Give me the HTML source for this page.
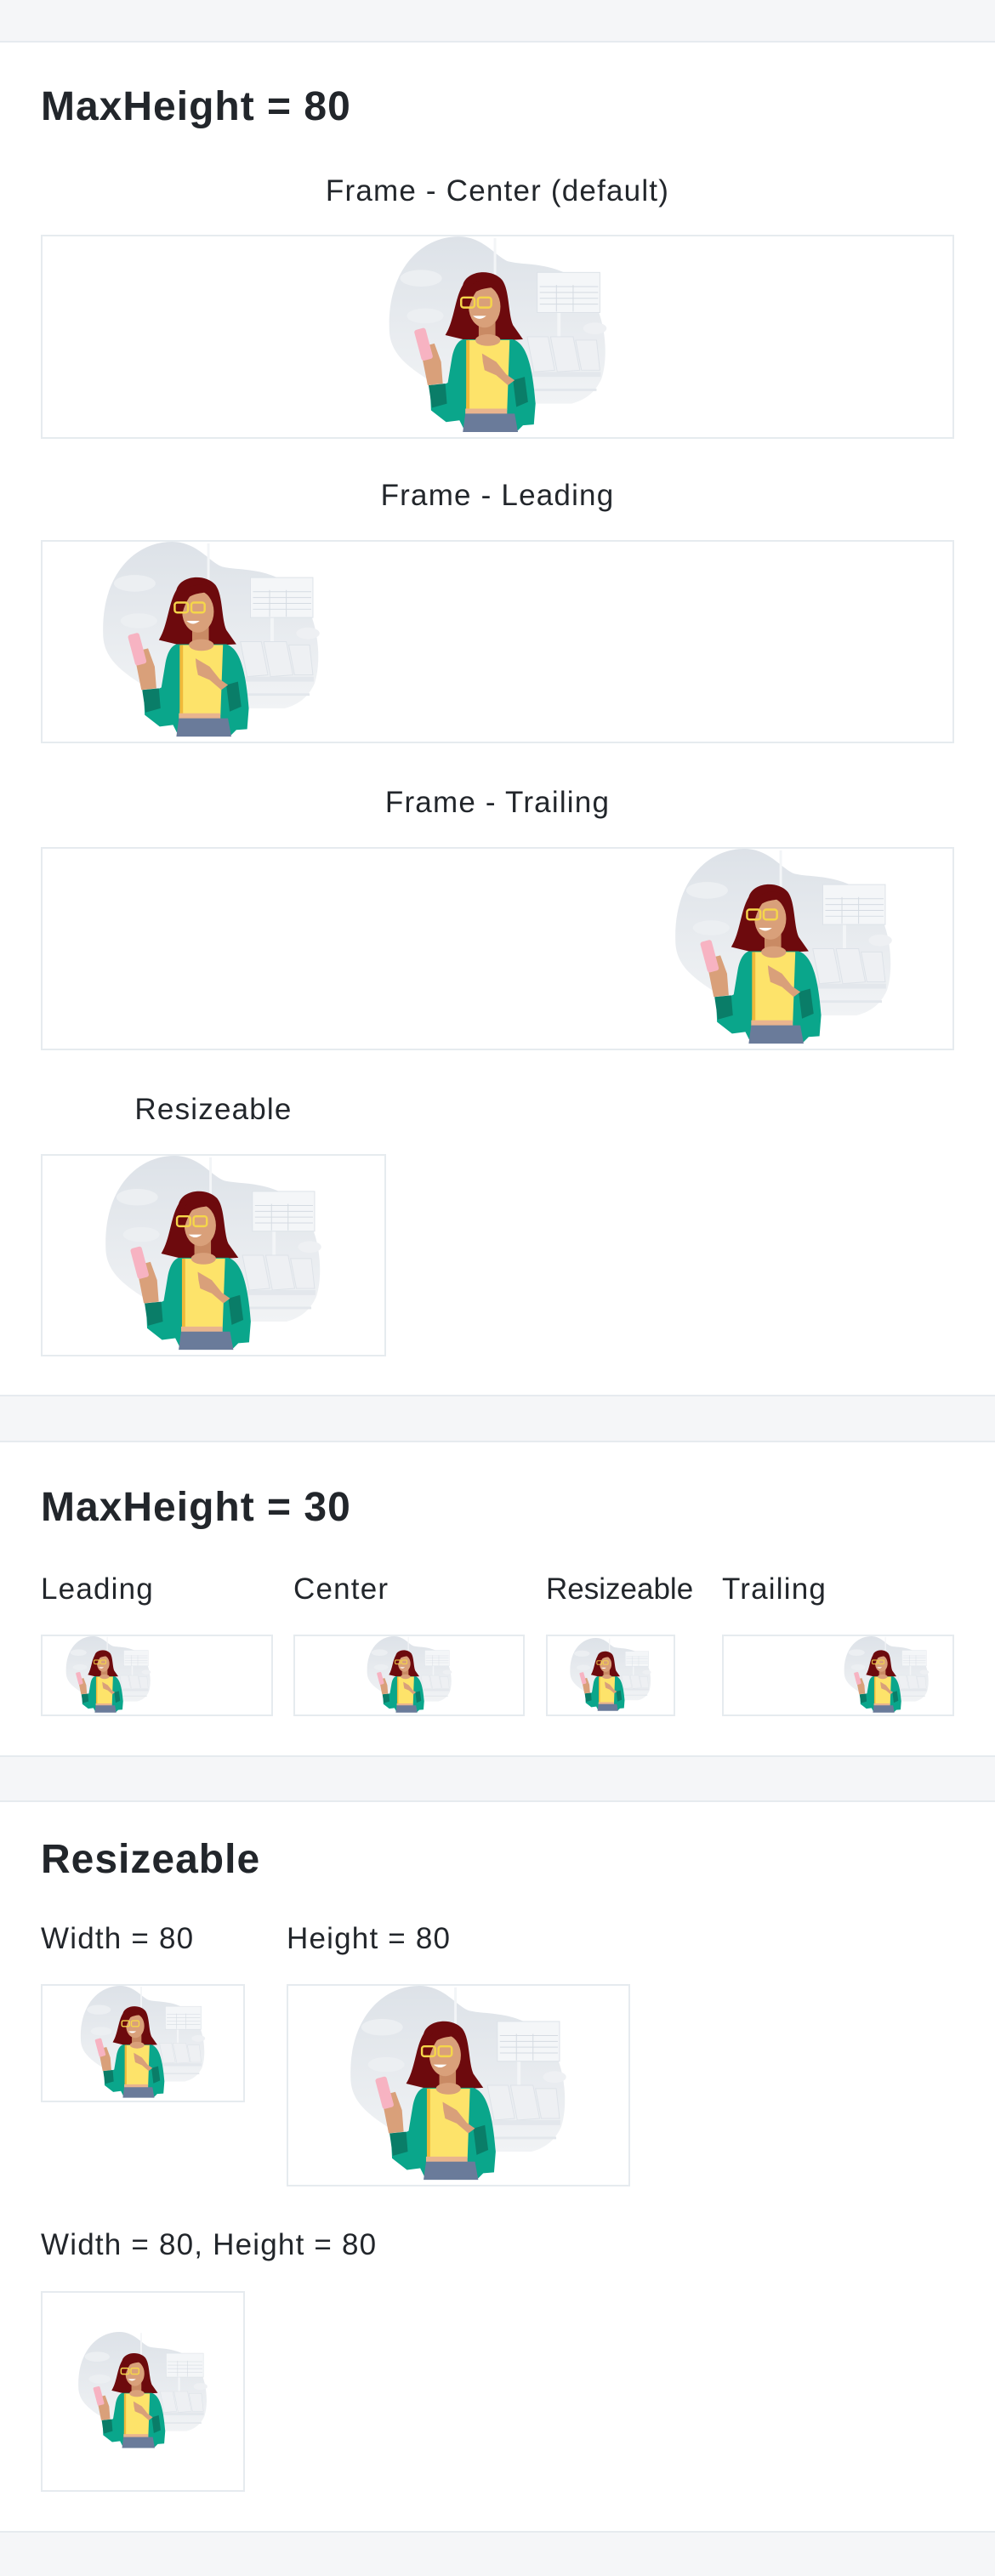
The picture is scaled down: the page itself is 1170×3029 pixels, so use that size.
<!DOCTYPE html>
<html><head><meta charset="utf-8">
<style>
*{margin:0;padding:0;box-sizing:border-box}
body{width:1170px;height:3029px;background:#f5f6f8;position:relative;font-family:"Liberation Sans",sans-serif;color:#22262b;overflow:hidden}
.sec{position:absolute;left:0;width:1170px;background:#fff;border-top:2px solid #e6ebef;border-bottom:2px solid #e6ebef}
.t{position:absolute;font-size:48px;font-weight:bold;line-height:46px;white-space:nowrap;letter-spacing:1px}
.l{position:absolute;font-size:35px;line-height:33px;white-space:nowrap;letter-spacing:1.2px}
.b{position:absolute;border:2px solid #e6ebef;background:#fff;display:flex;align-items:center;overflow:hidden}
.b svg{display:block;flex:none}
</style></head><body>
<svg width="0" height="0" style="position:absolute">
<defs>
<linearGradient id="bg" x1="0" y1="0" x2="0" y2="1"><stop offset="0" stop-color="#dde2e8"/><stop offset="1" stop-color="#f1f3f5"/></linearGradient>
<symbol id="g" viewBox="0 0 404 240">
<path d="M72 110 C70 40 110 0 155 0 C185 0 200 25 215 30 C235 35 270 30 300 55 C330 80 336 140 326 170 C318 188 305 196 290 200 L165 200 C110 165 72 150 72 110 Z" fill="url(#bg)"/>
<ellipse cx="110" cy="50" rx="25" ry="10" fill="#eceff2"/>
<ellipse cx="115" cy="95" rx="22" ry="9" fill="#eceff2"/>
<ellipse cx="318" cy="110" rx="14" ry="7" fill="#eef0f3"/>
<rect x="197" y="2" width="3" height="110" fill="#f3f5f7"/>
<rect x="273" y="88" width="4" height="40" fill="#f3f5f7"/>
<rect x="249" y="43" width="75" height="48" fill="#f4f6f8" stroke="#dde2e8"/>
<g stroke="#d5dbe2" stroke-width="1"><line x1="252" y1="60" x2="322" y2="60"/><line x1="252" y1="67" x2="322" y2="67"/><line x1="252" y1="74" x2="322" y2="74"/><line x1="252" y1="81" x2="322" y2="81"/><line x1="272" y1="58" x2="272" y2="90"/><line x1="292" y1="58" x2="292" y2="90"/></g>
<path d="M237 120 L262 120 L270 160 L245 162 Z M265 120 L292 120 L300 160 L273 162 Z M295 124 L320 124 L324 160 L302 160 Z" fill="#eef0f3" stroke="#dde2e8"/>
<rect x="240" y="162" width="85" height="6" fill="#e3e7ec"/>
<rect x="240" y="182" width="80" height="3" fill="#e3e7ec"/>
<path d="M160 58 C165 40 195 38 207 52 C216 64 214 92 220 106 L232 123 L200 125 L168 125 L139 118 C150 100 150 75 160 58 Z" fill="#6d0a0d"/>
<rect x="179" y="98" width="20" height="28" fill="#c98a64"/>
<ellipse cx="186" cy="84" rx="19" ry="25" fill="#d9a07a"/>
<path d="M164 70 C168 52 190 46 206 58 C200 62 186 60 176 66 C172 72 168 80 166 92 Z" fill="#6d0a0d"/>
<g fill="none" stroke="#f5d64a" stroke-width="2.5"><rect x="158" y="73" width="16" height="12" rx="3"/><rect x="178" y="73" width="16" height="12" rx="3"/></g>
<path d="M172 95 Q180 102 188 95 Z" fill="#fff"/>
<path d="M160 123 L220 123 C235 128 243 150 247 200 L245 225 L232 226 L226 232 L162 232 L156 220 L140 222 L122 208 L121 185 L142 175 L147 145 C150 130 155 125 160 123 Z" fill="#0aa68b"/>
<path d="M166 124 L216 124 L213 208 L164 208 Z" fill="#fde36a"/>
<rect x="164" y="124" width="4" height="84" fill="#f0b93a"/>
<ellipse cx="190" cy="124" rx="15" ry="7" fill="#d9a07a"/>
<rect x="163" y="206" width="50" height="7" fill="#e8b48e"/>
<path d="M163 212 L222 212 L226 234 L160 234 Z" fill="#6a7b9a"/>
<path d="M119 178 L139 176 L141 200 L123 205 Z" fill="#0a7d68"/>
<path d="M220 172 L234 168 L238 198 L224 204 Z" fill="#0a7d68"/>
<path d="M118 178 L112 148 L110 132 L126 128 L134 150 L136 176 Z" fill="#d9a07a"/>
<rect x="106" y="110" width="14" height="38" rx="3" transform="rotate(-15 113 129)" fill="#f7b3c2"/>
<path d="M183 140 L200 150 L212 165 L222 172 L214 178 L200 166 L186 160 L184 150 Z" fill="#d9a07a"/>
</symbol>
</defs></svg>

<div class="sec" style="top:48px;height:1594px"></div>
<div class="sec" style="top:1694px;height:372px"></div>
<div class="sec" style="top:2117px;height:861px"></div>

<div class="t" style="left:48px;top:103px">MaxHeight = 80</div>
<div class="l" style="left:0;width:1170px;text-align:center;top:208px">Frame - Center (default)</div>
<div class="b" style="left:48px;top:276px;width:1074px;height:240px;justify-content:center"><svg width="397" height="236"><use href="#g"/></svg></div>
<div class="l" style="left:0;width:1170px;text-align:center;top:566px">Frame - Leading</div>
<div class="b" style="left:48px;top:635px;width:1074px;height:239px;justify-content:flex-start"><svg width="397" height="235"><use href="#g"/></svg></div>
<div class="l" style="left:0;width:1170px;text-align:center;top:927px">Frame - Trailing</div>
<div class="b" style="left:48px;top:996px;width:1074px;height:239px;justify-content:flex-end"><svg width="397" height="235"><use href="#g"/></svg></div>
<div class="l" style="left:48px;width:406px;text-align:center;top:1288px">Resizeable</div>
<div class="b" style="left:48px;top:1357px;width:406px;height:238px;justify-content:center"><svg width="402" height="234"><use href="#g"/></svg></div>

<div class="t" style="left:48px;top:1750px">MaxHeight = 30</div>
<div class="l" style="left:48px;top:1852px">Leading</div>
<div class="l" style="left:345px;top:1852px">Center</div>
<div class="l" style="left:642px;top:1852px;letter-spacing:0">Resizeable</div>
<div class="l" style="left:849px;top:1852px">Trailing</div>
<div class="b" style="left:48px;top:1922px;width:273px;height:96px;justify-content:flex-start"><svg width="155" height="92"><use href="#g"/></svg></div>
<div class="b" style="left:345px;top:1922px;width:272px;height:96px;justify-content:center"><svg width="155" height="92"><use href="#g"/></svg></div>
<div class="b" style="left:642px;top:1922px;width:152px;height:96px;justify-content:center"><svg width="148" height="92"><use href="#g"/></svg></div>
<div class="b" style="left:849px;top:1922px;width:273px;height:96px;justify-content:flex-end"><svg width="155" height="92"><use href="#g"/></svg></div>

<div class="t" style="left:48px;top:2164px">Resizeable</div>
<div class="l" style="left:48px;top:2263px">Width = 80</div>
<div class="l" style="left:337px;top:2263px">Height = 80</div>
<div class="b" style="left:48px;top:2333px;width:240px;height:139px;justify-content:center"><svg width="236" height="135"><use href="#g"/></svg></div>
<div class="b" style="left:337px;top:2333px;width:404px;height:238px;justify-content:center"><svg width="400" height="234"><use href="#g"/></svg></div>
<div class="l" style="left:48px;top:2623px">Width = 80, Height = 80</div>
<div class="b" style="left:48px;top:2694px;width:240px;height:236px;justify-content:center"><svg width="236" height="140"><use href="#g"/></svg></div>
</body></html>
